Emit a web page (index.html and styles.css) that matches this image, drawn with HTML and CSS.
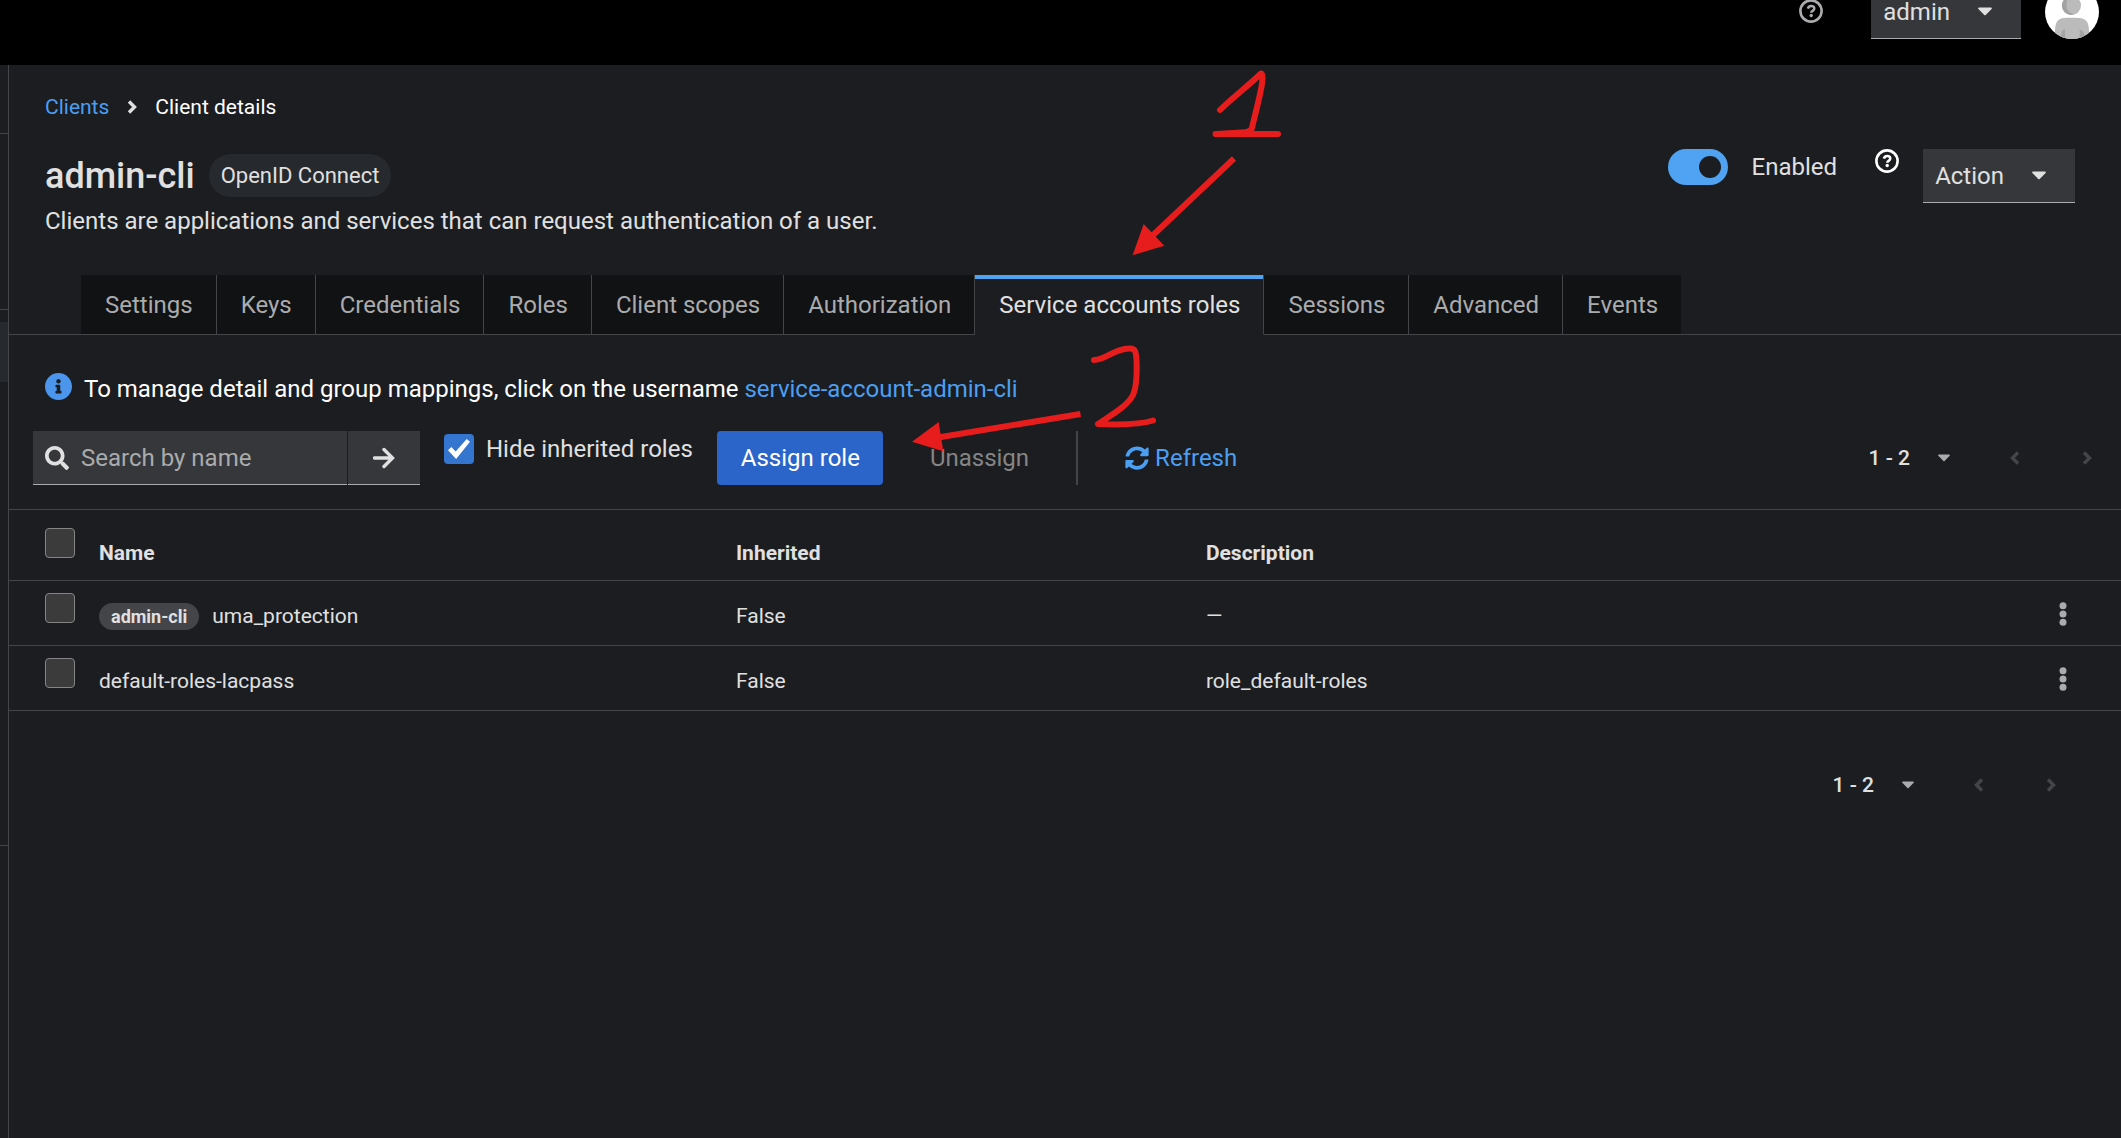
FILE: index.html
```html
<!DOCTYPE html>
<html lang="en">
<head>
<meta charset="utf-8">
<title>Client details</title>
<link rel="stylesheet" href="styles.css">
</head>
<body>
<svg class="sprite" aria-hidden="true">
  <symbol id="help" viewBox="0 0 24 24"><circle cx="12" cy="12" r="10.6" fill="none" stroke="currentColor" stroke-width="2.6"/><path d="M8.9 9.6C9.3 7.9 10.500 7 12.100 7c1.800 0 3.200 1 3.200 2.600 0 2.300-3 2.200-3 4.100" fill="none" stroke="currentColor" stroke-width="2.500"/><circle cx="12.200" cy="16.500" r="1.700" fill="currentColor"/></symbol>
  <symbol id="caret" viewBox="0 0 14 9"><path d="M1 .5h12c.8 0 1.200.9.6 1.500l-5.900 6c-.4.4-1 .4-1.400 0L.4 2C-.2 1.400.2.5 1 .5z" fill="currentColor"/></symbol>
  <symbol id="angle-right" viewBox="0 0 10 16"><path d="M2 2.500 7.500 8 2 13.500" fill="none" stroke="currentColor" stroke-width="3.400"/></symbol>
  <symbol id="angle-left" viewBox="0 0 10 16"><path d="M8 2.500 2.500 8 8 13.500" fill="none" stroke="currentColor" stroke-width="3.400"/></symbol>
  <symbol id="kebab" viewBox="0 0 8 24"><g fill="currentColor"><circle cx="4" cy="3.700" r="3.500"/><circle cx="4" cy="12" r="3.500"/><circle cx="4" cy="20.300" r="3.500"/></g></symbol>
</svg>

<header class="masthead">
  <button class="icon-button masthead-help" aria-label="Help"><svg class="icon"><use href="#help"/></svg></button>
  <button class="dropdown">admin <svg class="caret"><use href="#caret"/></svg></button>
  <svg class="avatar" viewBox="0 0 54 54" role="img" aria-label="Avatar">
    <defs><clipPath id="round"><circle cx="27" cy="27" r="27"/></clipPath></defs>
    <g clip-path="url(#round)">
      <rect width="54" height="54" fill="#fff"/>
      <circle cx="26.500" cy="20.500" r="9.500" fill="#bbb"/>
      <path d="M24 11.500c-4 1.200-7 4.700-7 9 0 5.200 4.300 9.500 9.500 9.500 1 0 2-.2 3-.5-5-1-8-4.500-8-9 0-4 1-7 2.500-9z" fill="#a3a3a3"/>
      <path d="M10 54V46c0-9 3-12.500 9-13 5-.5 10-.5 15 0 7 .5 10 4 10 13v8z" fill="#bbb"/>
      <path d="M20 54V44c-3 1-4 4-4 10zM34 54c1-4 1-7 .5-9 3 0 5 2 6 9z" fill="#a3a3a3"/>
    </g>
  </svg>
</header>

<div class="page">
  <nav class="sidebar" aria-label="Global">
    <div class="side-head"></div>
    <div class="side-manage"></div>
    <div class="side-links"><a class="side-current" href="#clients" aria-label="Clients"></a></div>
  </nav>

  <main class="main">
    <nav class="breadcrumb" aria-label="Breadcrumb">
      <a href="#clients">Clients</a>
      <svg class="angle"><use href="#angle-right"/></svg>
      <span class="crumb-current">Client details</span>
    </nav>

    <section class="heading">
      <div class="heading-text">
        <div class="title-row">
          <h1>admin-cli</h1>
          <span class="badge">OpenID Connect</span>
        </div>
        <p>Clients are applications and services that can request authentication of a user.</p>
      </div>
      <div class="heading-actions">
        <label class="switch"><input type="checkbox" role="switch" checked>Enabled</label>
        <button class="icon-button heading-help" aria-label="Help for enabled"><svg class="icon"><use href="#help"/></svg></button>
        <button class="dropdown">Action <svg class="caret"><use href="#caret"/></svg></button>
      </div>
    </section>

    <div class="tabs" role="tablist">
      <button role="tab">Settings</button>
      <button role="tab">Keys</button>
      <button role="tab">Credentials</button>
      <button role="tab">Roles</button>
      <button role="tab">Client scopes</button>
      <button role="tab">Authorization</button>
      <button role="tab" class="current" aria-selected="true">Service accounts roles</button>
      <button role="tab">Sessions</button>
      <button role="tab">Advanced</button>
      <button role="tab">Events</button>
    </div>

    <p class="info">
      <svg class="info-icon" viewBox="8 8 496 496"><path fill="currentColor" d="M256 8C119.043 8 8 119.083 8 256c0 136.997 111.043 248 248 248s248-111.003 248-248C504 119.083 392.957 8 256 8zm0 110c23.196 0 42 18.804 42 42s-18.804 42-42 42-42-18.804-42-42 18.804-42 42-42zm56 254c0 6.627-5.373 12-12 12h-88c-6.627 0-12-5.373-12-12v-24c0-6.627 5.373-12 12-12h12v-64h-12c-6.627 0-12-5.373-12-12v-24c0-6.627 5.373-12 12-12h64c6.627 0 12 5.373 12 12v100h12c6.627 0 12 5.373 12 12v24z"/></svg>
      <span>To manage detail and group mappings, click on the username <a href="#user">service-account-admin-cli</a></span>
    </p>

    <div class="toolbar">
      <form class="search">
        <label class="search-field">
          <svg class="icon" viewBox="0 0 512 512"><path fill="currentColor" d="M505 442.700L405.300 343c-4.500-4.500-10.600-7-17-7H372c27.600-35.300 44-79.700 44-128C416 93.100 322.900 0 208 0S0 93.100 0 208s93.100 208 208 208c48.300 0 92.700-16.400 128-44v16.300c0 6.400 2.500 12.500 7 17l99.700 99.700c9.400 9.400 24.600 9.400 33.900 0l28.300-28.300c9.400-9.400 9.400-24.600.1-34zM208 336c-70.700 0-128-57.200-128-128 0-70.700 57.200-128 128-128 70.700 0 128 57.200 128 128 0 70.700-57.200 128-128 128z"/></svg>
          <input type="text" placeholder="Search by name" aria-label="Search by name">
        </label>
        <button type="button" class="search-go" aria-label="Search"><svg class="go-icon" viewBox="0 0 22 22"><path d="M1.500 11h17M11 2.500 19.500 11 11 19.500" fill="none" stroke="currentColor" stroke-width="3.400" stroke-linecap="round"/></svg></button>
      </form>
      <label class="hide-inherited"><input class="tick" type="checkbox" checked>Hide inherited roles</label>
      <button class="primary">Assign role</button>
      <button class="plain" disabled>Unassign</button>
      <span class="divider"></span>
      <button class="plain refresh"><svg class="icon" viewBox="0 0 512 512"><path fill="currentColor" d="M370.720 133.280C339.458 104.008 298.888 87.962 255.848 88c-77.458.068-144.328 53.178-162.791 126.850-1.344 5.363-6.122 9.150-11.651 9.150H24.103c-7.498 0-13.194-6.807-11.807-14.176C33.933 94.924 134.813 8 256 8c66.448 0 126.791 26.136 171.315 68.685L463.030 40.970C478.149 25.851 504 36.559 504 57.941V192c0 13.255-10.745 24-24 24H345.941c-21.382 0-32.090-25.851-16.971-40.971l41.750-41.749zM32 296h134.059c21.382 0 32.090 25.851 16.971 40.971l-41.750 41.750c31.262 29.273 71.835 45.319 114.876 45.280 77.418-.07 144.315-53.144 162.787-126.849 1.344-5.363 6.122-9.150 11.651-9.150h57.304c7.498 0 13.194 6.807 11.807 14.176C478.067 417.076 377.187 504 256 504c-66.448 0-126.791-26.136-171.315-68.685L48.970 471.030C33.851 486.149 8 475.441 8 454.059V320c0-13.255 10.745-24 24-24z"/></svg>Refresh</button>
      <div class="pagination">
        <span>1 - 2</span>
        <button class="pager-menu" aria-label="Items per page"><svg class="small-caret"><use href="#caret"/></svg></button>
        <button class="pager" disabled aria-label="Previous page"><svg class="angle"><use href="#angle-left"/></svg></button>
        <button class="pager" disabled aria-label="Next page"><svg class="angle"><use href="#angle-right"/></svg></button>
      </div>
    </div>

    <table class="roles">
      <colgroup><col class="col-tick"><col class="col-name"><col class="col-inherited"><col><col class="col-menu"></colgroup>
      <thead>
        <tr><th class="cell-tick"><input class="tick" type="checkbox" aria-label="Select all rows"></th><th>Name</th><th>Inherited</th><th>Description</th><th></th></tr>
      </thead>
      <tbody>
        <tr>
          <td class="cell-tick"><input class="tick" type="checkbox" aria-label="Select uma_protection"></td>
          <td><span class="role"><span class="client-badge">admin-cli</span>uma_protection</span></td>
          <td>False</td><td>—</td>
          <td class="cell-menu"><button class="icon-button" aria-label="Row actions"><svg class="kebab"><use href="#kebab"/></svg></button></td>
        </tr>
        <tr>
          <td class="cell-tick"><input class="tick" type="checkbox" aria-label="Select default-roles-lacpass"></td>
          <td>default-roles-lacpass</td>
          <td>False</td><td>role_default-roles</td>
          <td class="cell-menu"><button class="icon-button" aria-label="Row actions"><svg class="kebab"><use href="#kebab"/></svg></button></td>
        </tr>
      </tbody>
    </table>

    <div class="pagination pagination-bottom">
      <span>1 - 2</span>
      <button class="pager-menu" aria-label="Items per page"><svg class="small-caret"><use href="#caret"/></svg></button>
      <button class="pager" disabled aria-label="Previous page"><svg class="angle"><use href="#angle-left"/></svg></button>
      <button class="pager" disabled aria-label="Next page"><svg class="angle"><use href="#angle-right"/></svg></button>
    </div>
  </main>
</div>

<svg class="marks" viewBox="900 60 400 400" aria-hidden="true">
  <g fill="none" stroke="#e71d1d" stroke-width="6" stroke-linecap="round" stroke-linejoin="round">
    <path d="M1220 110C1232 98 1248 86 1261 73.500 1265 74 1261 92 1251.500 129.500L1247 132M1215.500 134H1278"/>
    <path d="M1094 360C1106 360 1113 349 1129 348.500 1135 348 1136 351 1136.500 360 1137 372 1137 386 1133 395 1127 407 1108 417 1098 424 1120 425 1142 424 1153 420.500"/>
  </g>
  <path d="M1216 131 1250 129V135H1220z" fill="#e71d1d"/>
  <g stroke="#e71d1d" stroke-width="6"><path d="M1234 158.500 1150 238M1080.500 414 935 438"/></g>
  <path d="M1132.600 255.300 1143.700 224 1164.300 245.700zM912 441.700 938.700 422 943.300 451.300z" fill="#e71d1d"/>
</svg>
</body>
</html>
```
FILE: styles.css
```css
* { box-sizing: border-box; }

body {
  margin: 0;
  min-height: 100vh;
  display: flex;
  flex-direction: column;
  position: relative;
  background: #1b1d21;
  color: #e0e0e0;
  font: 24px/36px Roboto, "Liberation Sans", sans-serif;
}

h1, p { margin: 0; font-weight: 400; }
a { color: #4b9ff2; text-decoration: none; }
button, input { font: inherit; color: inherit; margin: 0; }
button { border: 0; padding: 0; background: none; }
svg { display: block; flex: none; }

.sprite { position: absolute; width: 0; height: 0; }
.icon { width: 24px; height: 24px; }
.caret { width: 14px; height: 9px; }
.small-caret { width: 12px; height: 8px; }
.angle { width: 10px; height: 16px; }
.kebab { width: 8px; height: 24px; color: #aaabac; }

/* Masthead */
.masthead {
  height: 65px;
  display: flex;
  justify-content: flex-end;
  align-items: flex-end;
  padding: 0 22px 26px 0;
  background: #000;
  overflow: hidden;
}
.masthead-help { margin: 0 48px 16px 0; color: #aaabac; }
.avatar { width: 54px; height: 54px; margin-left: 24px; }

.dropdown {
  height: 54px;
  display: flex;
  align-items: center;
  justify-content: space-between;
  gap: 28px;
  padding: 0 29px 0 12px;
  background: #36373a;
  border-bottom: 1px solid #aaabac;
}

/* Page frame */
.page { flex: 1; display: flex; }
.sidebar {
  width: 9px;
  display: flex;
  flex-direction: column;
  border-right: 1px solid #444548;
}
.side-head { height: 69px; border-bottom: 1px solid #444548; }
.side-manage { height: 176px; border-bottom: 1px solid #444548; }
.side-links { height: 536px; padding-top: 12px; border-bottom: 1px solid #444548; }
.side-current { display: block; height: 60px; background: #26292d; }
.main { flex: 1; min-width: 0; }

/* Heading */
.breadcrumb {
  display: flex;
  align-items: center;
  gap: 18px;
  padding: 28px 36px 0;
  font-size: 21px;
  line-height: 28px;
}
.crumb-current { color: #fff; }
.heading {
  display: flex;
  justify-content: space-between;
  padding: 28px 46px 36px 36px;
}
.heading-text { padding-top: 5px; }
.title-row { display: flex; align-items: center; gap: 14px; margin-bottom: 6px; }
h1 { font-size: 36px; font-weight: 500; }
.badge {
  padding: 4px 12px 3px;
  border-radius: 24px;
  background: #26292d;
  font-size: 22px;
}
.heading-actions { display: flex; align-items: flex-start; }
.heading-help { color: #fff; margin: 0 24px 0 38px; }
.switch { display: flex; gap: 24px; }
.switch input {
  appearance: none;
  width: 60px;
  height: 36px;
  padding: 7px;
  border-radius: 18px;
  background: #4fa3f2;
}
.switch input::before {
  content: "";
  display: block;
  width: 22px;
  height: 22px;
  margin-left: auto;
  border-radius: 50%;
  background: #1b1d21;
}

/* Tabs */
.tabs {
  display: flex;
  padding-left: 72px;
  box-shadow: inset 0 -1px #444548;
}
.tabs button {
  height: 60px;
  padding: 0 23px 0 24px;
  background: #111214;
  border-right: 1px solid #444548;
  border-bottom: 1px solid #444548;
  color: #aaabac;
}
.tabs button:last-child { border-right: 0; }
.tabs .current {
  background: #1b1d21;
  border-bottom-color: #1b1d21;
  box-shadow: inset 0 4px #4fa3f2;
  color: #e0e0e0;
}

.info {
  display: flex;
  align-items: flex-start;
  gap: 12px;
  padding: 36px 36px 24px;
  color: #fff;
}
.info-icon { width: 27px; height: 27px; margin-top: 2px; color: #4b96ec; }

/* Toolbar */
.toolbar {
  display: flex;
  align-items: flex-start;
  padding: 0 4px 24px 24px;
}
.search { display: flex; gap: 1px; margin-right: 24px; }
.search-field {
  width: 314px;
  height: 54px;
  display: flex;
  align-items: center;
  gap: 12px;
  padding: 0 12px;
  background: #36373a;
  border-bottom: 1px solid #aaabac;
}
.search-field input {
  flex: 1;
  min-width: 0;
  padding: 0;
  border: 0;
  background: none;
}
.search-field input::placeholder { color: #aaabac; opacity: 1; }
.search-go {
  width: 72px;
  height: 54px;
  display: flex;
  align-items: center;
  justify-content: center;
  background: #36373a;
  border-bottom: 1px solid #aaabac;
}
.go-icon { width: 22px; height: 22px; }
.tick {
  appearance: none;
  flex: none;
  width: 30px;
  height: 30px;
  display: block;
  border: 1px solid #858585;
  border-radius: 4px;
  background: #3b3b3b;
}
.tick:checked { border: 0; background: #3375cf; }
.tick:checked::before {
  content: "";
  display: block;
  width: 22px;
  height: 20px;
  margin: 5px 4px;
  background: #fff;
  clip-path: polygon(0 56%, 15% 40%, 35% 62%, 85% 0, 100% 14%, 37% 100%);
}
.hide-inherited { display: flex; align-items: center; gap: 12px; margin-right: 24px; }
.primary {
  height: 54px;
  padding: 0 23px 0 24px;
  border-radius: 4px;
  background: #2b65c9;
  color: #fff;
}
.plain { height: 54px; padding: 0 47px; }
.plain:disabled { color: #858585; }
.divider { width: 2px; height: 54px; background: #444548; }
.refresh { display: flex; align-items: center; gap: 6px; color: #4b9ff2; }

.pagination {
  height: 54px;
  display: flex;
  align-items: center;
  margin-left: auto;
  font-size: 21px;
  font-weight: 500;
}
.pager-menu, .pager { height: 54px; display: flex; align-items: center; justify-content: center; }
.pager-menu { width: 48px; margin: 0 17px 0 10px; color: #aaabac; }
.pager { width: 60px; color: #444548; }
.pager + .pager { margin-left: 12px; }
.pagination-bottom { justify-content: flex-end; margin-top: 47px; padding-right: 40px; }

/* Roles table */
.roles {
  width: 100%;
  table-layout: fixed;
  border-collapse: collapse;
  border-top: 1px solid #444548;
  font-size: 21px;
  line-height: 32px;
}
.roles tr { height: 65px; border-bottom: 1px solid #444548; }
.roles thead tr { height: 71px; }
.roles th, .roles td { padding: 19px 0 0; text-align: left; vertical-align: top; }
.roles th { padding-top: 27px; font-weight: 700; }
.roles .cell-tick { padding: 12px 0 0 36px; }
.roles th.cell-tick { padding-top: 18px; }
.roles .cell-menu { padding: 18px 0 0 24px; }
.cell-menu .icon-button { padding: 3px 0; }
.col-tick { width: 90px; }
.col-name { width: 30.160%; }
.col-inherited { width: 22.250%; }
.col-menu { width: 86px; }
.role { display: flex; align-items: center; gap: 13px; }
.client-badge {
  padding: 0 12px;
  border-radius: 14px;
  background: #444548;
  font-size: 18px;
  font-weight: 700;
  line-height: 27px;
}

/* Hand-drawn step marks over the page */
.marks {
  position: absolute;
  top: 60px;
  left: 900px;
  width: 400px;
  height: 400px;
  pointer-events: none;
}
```
